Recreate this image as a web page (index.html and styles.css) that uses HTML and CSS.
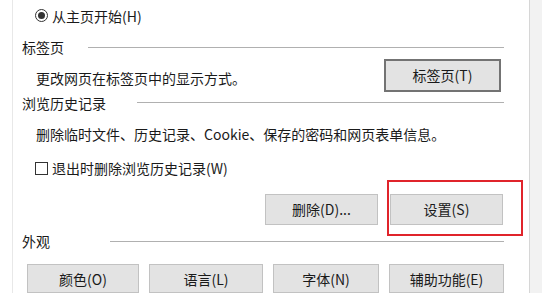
FILE: index.html
```html
<!DOCTYPE html>
<html lang="zh-CN">
<head>
<meta charset="utf-8">
<link rel="stylesheet" href="styles.css">
</head>
<body>
<div class="page">
  <div class="panel">
    <div class="radio-row indent">
      <span class="radio"><span class="dot"></span></span>
      <span class="label">从主页开始(H)</span>
    </div>

    <div class="hdr hdr1">
      <span class="hdr-text">标签页</span>
      <span class="hdr-line l1"></span>
    </div>
    <div class="desc1 indent">
      <span class="desc1-text">更改网页在标签页中的显示方式。</span>
      <button class="btn btn-default">标签页(T)</button>
    </div>

    <div class="hdr hdr2">
      <span class="hdr-text">浏览历史记录</span>
      <span class="hdr-line l2"></span>
    </div>
    <div class="desc2 indent">删除临时文件、历史记录、Cookie、保存的密码和网页表单信息。</div>
    <div class="check-row indent">
      <span class="check"></span>
      <span class="label">退出时删除浏览历史记录(W)</span>
    </div>
    <div class="btn-row">
      <button class="btn btn-mid">删除(D)...</button>
      <button class="btn btn-mid">设置(S)</button>
    </div>

    <div class="hdr hdr3">
      <span class="hdr-text">外观</span>
      <span class="hdr-line l3"></span>
    </div>
    <div class="bottom-row">
      <button class="btn btn-b w1">颜色(O)</button>
      <button class="btn btn-b w2">语言(L)</button>
      <button class="btn btn-b w3">字体(N)</button>
      <button class="btn btn-b w4">辅助功能(E)</button>
    </div>
  </div>
  <div class="strip"></div>
  <div class="highlight"></div>
</div>
</body>
</html>
```

FILE: styles.css
```css
* { box-sizing: border-box; }
html, body { margin: 0; padding: 0; background: #fff; }
body {
  font-family: "Noto Sans CJK SC", "Microsoft YaHei", "Noto Sans", sans-serif;
  font-size: 14px;
  color: #1a1a1a;
}
.page {
  position: relative;
  width: 542px;
  height: 293px;
  overflow: hidden;
  display: flex;
  background: #fff;
}
.panel {
  margin-left: 12px;
  width: 518px;
  height: 293px;
  border-left: 1px solid #e8e8e8;
  border-right: 1px solid #d6d6d6;
  padding-left: 9px;
  padding-right: 25px;
  display: flex;
  flex-direction: column;
}
.strip {
  flex: 1;
  background: #f2f2f2;
}
.indent { padding-left: 14px; }

.radio-row {
  margin-top: 4px;
  height: 24px;
  display: flex;
  align-items: center;
}
.radio {
  width: 13px;
  height: 13px;
  border: 1px solid #333;
  border-radius: 50%;
  display: flex;
  align-items: center;
  justify-content: center;
  margin-left: -1px;
}
.dot {
  width: 7px;
  height: 7px;
  border-radius: 50%;
  background: #333;
}
.label { margin-left: 4px; line-height: 20px; }

.hdr {
  display: flex;
  align-items: center;
}
.hdr-text { line-height: 20px; white-space: nowrap; }
.hdr-line {
  flex: 1;
  height: 1px;
  background: #b0b0b0;
}
.hdr1 { padding-top: 8px; height: 32px; }
.hdr2 { height: 22px; }
.hdr3 { height: 34px; }
.l1 { margin-left: 24px; }
.l2 { margin-left: 31px; }
.l3 { margin-left: 60px; }

.desc1 {
  height: 33px;
  display: flex;
  align-items: flex-start;
  justify-content: space-between;
}
.desc1-text { line-height: 20px; margin-top: 9px; }

.desc2 {
  height: 42px;
  display: flex;
  align-items: center;
  line-height: 20px;
  white-space: nowrap;
}

.check-row {
  height: 28px;
  display: flex;
  align-items: center;
}
.check {
  width: 13px;
  height: 13px;
  border: 1px solid #333;
  margin-left: -1px;
  background: #fff;
}

.btn {
  font-family: inherit;
  font-size: 14px;
  color: #1a1a1a;
  background: #e3e3e3;
  border: 1px solid #c2c2c2;
  padding: 0;
  margin: 0;
  line-height: 20px;
}
.btn-default {
  width: 117px;
  height: 33px;
  border: 2px solid #737373;
  margin-right: 3px;
}
.btn-row {
  margin-top: 12px;
  height: 31px;
  display: flex;
  justify-content: flex-end;
  gap: 12px;
  padding-right: 1px;
}
.btn-mid { width: 113px; height: 31px; }

.bottom-row {
  margin-top: 6px;
  padding-left: 5px;
  display: flex;
  gap: 10px;
}
.btn-b { height: 29px; }
.w1 { width: 112px; }
.w2 { width: 114px; }
.w3 { width: 106px; }
.w4 { width: 115px; }

.highlight {
  position: absolute;
  left: 387px;
  top: 180px;
  width: 136px;
  height: 56px;
  border: 2px solid #e0242b;
  pointer-events: none;
}
```
